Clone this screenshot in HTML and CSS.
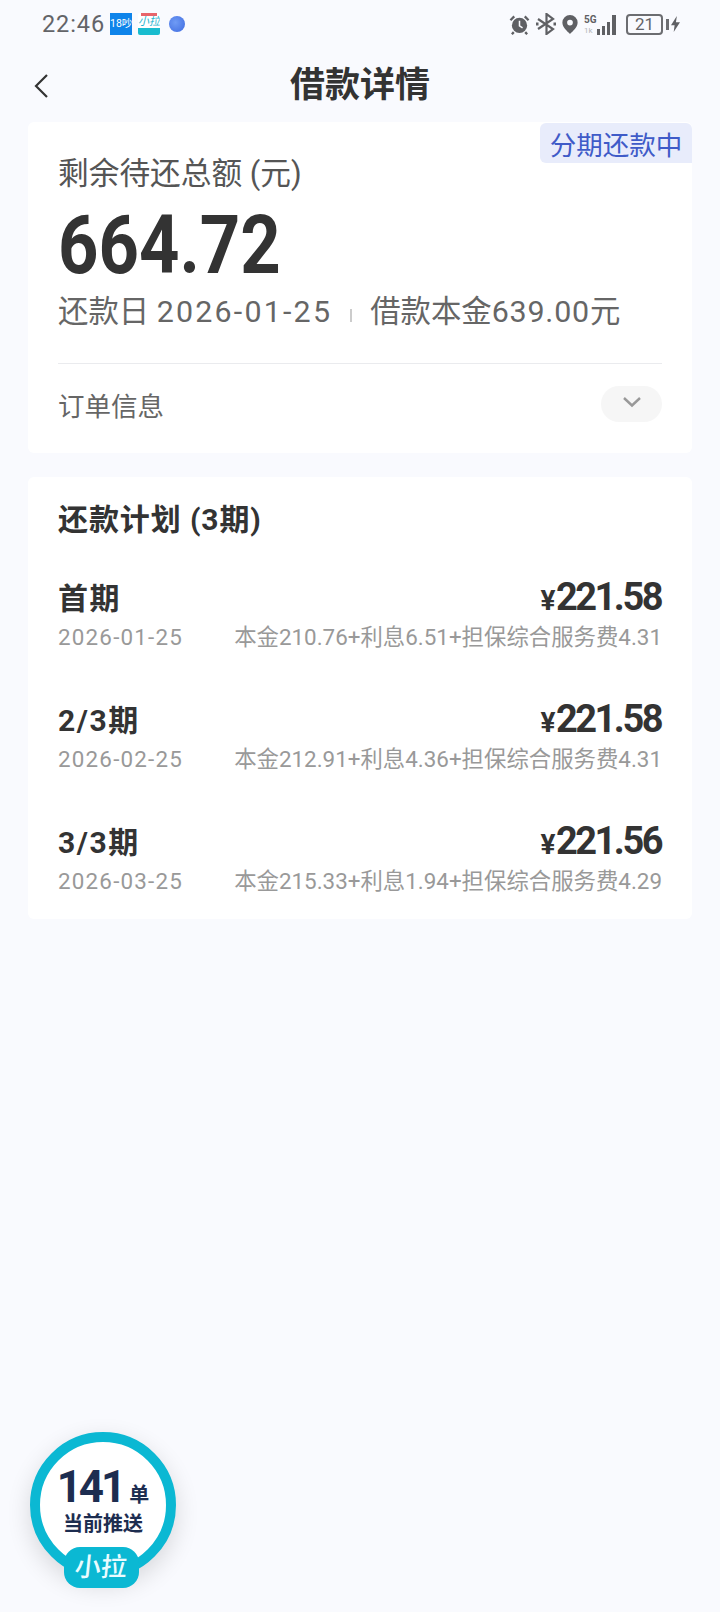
FILE: index.html
```html
<!DOCTYPE html>
<html lang="zh">
<head>
<meta charset="utf-8">
<title>借款详情</title>
<link rel="stylesheet" href="styles.css">
</head>
<body>
<div class="page">
  <div class="statusbar">
    <div class="status-left">
      <span class="clock">22:46</span>
      <span class="app app-blue">18吵</span>
      <span class="app app-lala"><span class="lala-red"></span><span class="lala-top">小拉</span><span class="lala-bottom"></span></span>
      <span class="dot"></span>
    </div>
    <div class="status-right">
      <svg class="ic-alarm" viewBox="0 0 22 22" width="21" height="21">
        <circle cx="11" cy="12" r="8" fill="#5f6064"/>
        <path d="M11 7v5.500l3.200 2" fill="none" stroke="#f9fafe" stroke-width="1.600"/>
        <path d="M1.500 6.500 5.500 2.500M20.500 6.500l-4-4M5 19l-2 2.200M17 19l2 2.200" stroke="#5f6064" stroke-width="2.400" fill="none"/>
      </svg>
      <svg class="ic-bt" viewBox="0 0 20 22" width="20" height="22">
        <path d="M2 6l15 10-6.500 5V1l6.500 5L2 16" fill="none" stroke="#5f6064" stroke-width="2.200"/>
        <path d="M0 9.500h2.500v3H0zM17.500 9.500H20v3h-2.500z" fill="#5f6064"/>
      </svg>
      <svg class="ic-loc" viewBox="0 0 18 22" width="18" height="21">
        <path fill-rule="evenodd" d="M9 1a8 8 0 0 1 8 8c0 5-5 9-8 12-3-3-8-7-8-12a8 8 0 0 1 8-8zm0 5a3 3 0 1 0 0 6 3 3 0 0 0 0-6z" fill="#5f6064"/>
      </svg>
      <div class="signal">
        <div class="net"><span class="net-5g">5G</span><span class="net-sub">1k</span></div>
        <svg viewBox="0 0 22 21" width="22" height="21">
          <path d="M1 15h3v6H1zM6 12h3v9H6zM11 8h3v13h-3zM16 1h4v20h-4z" fill="#5f6064"/>
        </svg>
      </div>
      <div class="battery"><span class="batt-box">21</span><span class="batt-cap"></span></div>
      <svg class="ic-bolt" viewBox="0 0 10 18" width="9" height="18">
        <path d="M6.500 0 0 10.500h4L3 18l7-11H5.500z" fill="#5f6064"/>
      </svg>
    </div>
  </div>

  <header class="navbar">
    <svg class="back" viewBox="0 0 16 26" width="16" height="26">
      <path d="M14 2 3 13l11 11" fill="none" stroke="#333" stroke-width="2.200"/>
    </svg>
    <h1 class="title">借款详情</h1>
  </header>

  <section class="card summary">
    <span class="tag">分期还款中</span>
    <div class="sum-label">剩余待还总额 (元)</div>
    <div class="sum-amount"><span>664.72</span></div>
    <div class="sum-meta">
      <span>还款日 <span class="wide">2026-01-25</span></span>
      <span class="sep"></span>
      <span>借款本金<span class="wide-s">639.00</span>元</span>
    </div>
    <div class="order-row">
      <span class="order-label">订单信息</span>
      <span class="toggle">
        <svg viewBox="0 0 20 12" width="20" height="12"><path d="M2 2l8 7.500L18 2" fill="none" stroke="#999" stroke-width="2.400"/></svg>
      </span>
    </div>
  </section>

  <section class="card plan">
    <h2 class="plan-title">还款计划 (3期)</h2>
    <div class="plan-row">
      <div class="row-main"><span class="period">首期</span><span class="money"><i>¥</i>221.58</span></div>
      <div class="row-sub"><span class="date">2026-01-25</span><span>本金210.76+利息6.51+担保综合服务费4.31</span></div>
    </div>
    <div class="plan-row">
      <div class="row-main"><span class="period">2/3期</span><span class="money"><i>¥</i>221.58</span></div>
      <div class="row-sub"><span class="date">2026-02-25</span><span>本金212.91+利息4.36+担保综合服务费4.31</span></div>
    </div>
    <div class="plan-row">
      <div class="row-main"><span class="period">3/3期</span><span class="money"><i>¥</i>221.56</span></div>
      <div class="row-sub"><span class="date">2026-03-25</span><span>本金215.33+利息1.94+担保综合服务费4.29</span></div>
    </div>
  </section>

  <aside class="float">
    <div class="float-count"><b>141</b><span>单</span></div>
    <div class="float-text">当前推送</div>
    <div class="float-pill"><span>小拉</span></div>
  </aside>
</div>
</body>
</html>
```
FILE: styles.css
```css
* { box-sizing: border-box; }
html, body { margin: 0; padding: 0; }
body {
  background: #f9fafe;
  color: #333;
  font-family: "Roboto", "Noto Sans CJK SC", sans-serif;
}
.page { position: relative; width: 720px; height: 1612px; overflow: hidden; padding: 0 28px; }

.statusbar {
  height: 48px;
  margin: 0 -28px;
  padding: 0 40px 0 42px;
  display: flex;
  align-items: center;
  justify-content: space-between;
}
.status-left, .status-right { display: flex; align-items: center; }
.clock { width: 62px; font-size: 23.500px; color: #636468; letter-spacing: .9px; margin-right: 6px; white-space: nowrap; }
.app { width: 22px; height: 22px; margin-right: 6px; display: block; }
.app-blue { background: #0f84ea; color: #fff; font-size: 10.500px; line-height: 22px; text-align: center; white-space: nowrap; overflow: hidden; }
.app-lala { background: #fff; display: flex; flex-direction: column; align-items: center; border-radius: 2px; overflow: hidden; }
.lala-red { width: 16px; height: 3px; background: #e8646a; }
.lala-top { font-size: 11px; line-height: 12px; color: #1fb5cf; flex: 1; font-style: italic; white-space: nowrap; }
.lala-bottom { width: 100%; height: 7px; background: #19bccf; }
.dot { width: 16px; height: 16px; margin-left: 3px; border-radius: 50%; background: radial-gradient(circle at 40% 40%, #6f9bf5, #3f6be0); }
.status-right svg { display: block; }
.ic-alarm { margin-right: 6px; }
.ic-bt { margin-right: 5px; }
.ic-loc { margin-right: 5px; }
.signal { display: flex; align-items: flex-end; height: 22px; margin-right: 8px; }
.net { display: flex; flex-direction: column; width: 12px; }
.net-5g { font-size: 10px; font-weight: 700; line-height: 12px; color: #5f6064; white-space: nowrap; }
.net-sub { font-size: 8px; line-height: 9px; color: #b5b6b9; }
.battery { display: flex; align-items: center; margin-right: 2px; }
.batt-box { width: 37px; height: 21px; border: 2px solid #6c6d71; border-radius: 4px; font-size: 17px; line-height: 17px; text-align: center; color: #636468; }
.batt-cap { width: 3px; height: 11px; margin-left: 3px; background: #6c6d71; }

.navbar { height: 74px; position: relative; display: flex; align-items: center; justify-content: center; padding-top: 2px; }
.back { position: absolute; left: 5px; top: 25px; }
.title { margin: 0; font-size: 35px; font-weight: 700; line-height: 44px; color: #333; }

.card { background: #fff; border-radius: 6px; }
.summary { position: relative; height: 331px; padding: 32px 30px 0; }
.tag {
  position: absolute; right: 0; top: 1px;
  width: 152px; height: 40px;
  background: #e8ecfb;
  border-radius: 6px 6px 0 6px;
  color: #3f5bc8;
  font-size: 26.500px; line-height: 46px; text-align: center; white-space: nowrap;
}
.sum-label { font-size: 30.700px; line-height: 40px; color: #555; white-space: nowrap; }
.sum-amount { font-size: 82px; font-weight: 700; line-height: 80px; margin-top: 11px; color: #333; }
.sum-amount span { display: inline-block; transform: scaleX(.86); transform-origin: 0 50%; }
.sum-meta { display: flex; align-items: center; font-size: 30.400px; line-height: 40px; color: #666; margin-top: 7px; white-space: nowrap; }
.wide { letter-spacing: 2.200px; }
.wide-s { letter-spacing: .8px; }
.sep { width: 2px; height: 13px; background: #ccc; margin: 6px 18px 0; }
.order-row {
  margin-top: 31px; padding-top: 22px;
  border-top: 1px solid #eaebee;
  display: flex; align-items: flex-start; justify-content: space-between;
  font-size: 26.500px; line-height: 36px; color: #666;
}
.order-label { margin-top: 3px; }
.toggle { width: 61px; height: 36px; border-radius: 18px; background: #f6f6f6; display: flex; align-items: center; justify-content: center; padding-bottom: 4px; }
.toggle svg { display: block; }

.plan { margin-top: 24px; height: 442px; padding: 23px 30px 0; }
.plan-title { margin: 0 0 39px; font-size: 30px; line-height: 40px; font-weight: 700; color: #333; letter-spacing: .9px; white-space: nowrap; }
.plan-row { height: 122px; }
.row-main { display: flex; align-items: center; justify-content: space-between; height: 40px; }
.period { font-size: 30px; font-weight: 700; line-height: 40px; letter-spacing: 1.600px; }
.money { font-size: 38px; font-weight: 700; line-height: 40px; letter-spacing: -2.500px; margin-right: 1px; }
.money i { font-style: normal; font-size: 28px; margin-right: 3px; }
.row-sub { display: flex; justify-content: space-between; font-size: 22.400px; line-height: 32px; color: #999; margin-top: 2px; white-space: nowrap; }
.date { letter-spacing: 1.200px; }

.float {
  position: absolute; left: 30px; top: 1432px;
  width: 146px; height: 146px;
  border: 10px solid #0bb8d3;
  border-radius: 50%;
  background: #fff;
  box-shadow: 0 8px 24px rgba(0, 0, 0, .14);
  text-align: center;
  color: #1d2d50;
}
.float-count { display: flex; align-items: baseline; justify-content: center; margin-top: 22px; height: 46px; }
.float-count b { font-size: 44px; line-height: 46px; font-weight: 700; letter-spacing: -3px; }
.float-count span { font-size: 20px; font-weight: 700; margin-left: 6px; }
.float-text { font-size: 20px; font-weight: 700; line-height: 26px; margin-top: 1px; white-space: nowrap; }
.float-pill {
  position: absolute; left: 24px; top: 105px;
  width: 75px; height: 41px;
  border-radius: 16px;
  background: #0bb8d3;
  color: #eafcff;
  font-size: 26px; line-height: 41px; font-weight: 500;
}
.float-pill span { display: inline-block; transform: skewX(-6deg); }
```
